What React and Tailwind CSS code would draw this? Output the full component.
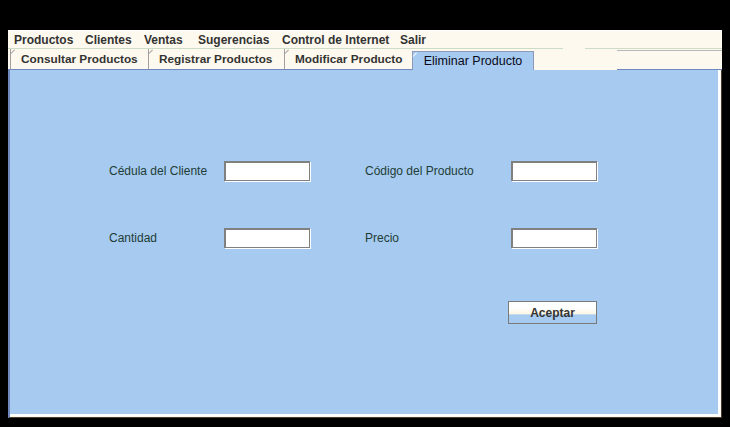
import React from 'react';

const menu = [
  { label: 'Productos', w: 'w-[71px]' },
  { label: 'Clientes', w: 'w-[59px]' },
  { label: 'Ventas', w: 'w-[54px]' },
  { label: 'Sugerencias', w: 'w-[84px]' },
  { label: 'Control de Internet', w: 'w-[118px]' },
  { label: 'Salir', w: 'w-[40px]' },
];

const tabs = [
  { label: 'Consultar Productos', w: 'w-[138px]' },
  { label: 'Registrar Productos', w: 'w-[136px]' },
  { label: 'Modificar Producto', w: 'w-[128px]' },
];

// Campo de texto clásico con borde hundido
const Field = () => (
  <input
    type="text"
    className="w-[86px] h-[20px] bg-white border-t-2 border-l-2 border-r border-b border-[#808080] shadow-[1px_1px_0_#ffffff] outline-none"
  />
);

const Label = ({ children, w }) => (
  <span className={`${w} text-[12px] text-[#1f3d36]`}>{children}</span>
);

export default function App() {
  return (
    <div
      className="w-[730px] h-[427px] bg-black pt-[30px] pl-[8px] overflow-hidden"
      style={{ fontFamily: '"Liberation Sans", Arial, sans-serif' }}
    >
      <div className="w-[714px] h-[388px] bg-[#fdf9ee] flex flex-col">
        {/* Barra de menú */}
        <div className="h-[18px] border-t border-white flex items-center pl-[6px] text-[12px] font-bold text-[#333333]">
          {menu.map((m) => (
            <span key={m.label} className={`${m.w} shrink-0`}>
              {m.label}
            </span>
          ))}
        </div>
        <div className="flex h-px">
          <div className="w-[555px] bg-[#cddcc6]" />
          <div className="w-[22px]" />
          <div className="flex-1 bg-[#cddcc6]" />
        </div>

        {/* Pestañas */}
        <div className="flex h-[21px]">
          <div className="w-[2px] border-b border-[#7088bd]" />
          {tabs.map((t) => (
            <div
              key={t.label}
              className={`${t.w} relative border-l border-[#a0a0a0] border-b border-b-[#7088bd] flex items-center pl-[10px] text-[11.8px] font-bold text-[#333333] pt-[1px]`}
            >
              <span className="absolute left-0 top-0 w-[5px] h-px bg-[#a0a0a0] origin-left -rotate-45 translate-y-[4px]" />
              {t.label}
            </div>
          ))}
          <div className="w-[122px] mt-[2px] bg-[#a6caf0] border-l border-t border-r border-[#8c9ab8] flex items-center justify-center text-[12.5px] text-[#0a0a1a] relative">
            <span className="absolute left-0 top-0 w-[5px] h-px bg-white origin-left -rotate-45 translate-y-[4px]" />
            Eliminar Producto
          </div>
          <div className="w-[83px]" />
          <div className="flex-1 border-t border-t-[#b8b8b8] mt-[1px] border-b border-b-[#7088bd]" />
        </div>

        {/* Panel */}
        <div className="flex-1 flex border-l-2 border-[#7088bd] border-r border-r-[#4a3f36] border-b border-b-[#4a3f36]">
          <div className="flex-1 border-r border-b border-[#fdf9ee]">
            <div className="h-full bg-[#a6caf0] border-r-2 border-b-2 border-white pl-[99px] pt-[91px] flex flex-col">
              <div className="flex items-center h-[20px]">
                <Label w="w-[115px]">Cédula del Cliente</Label>
                <Field />
                <span className="w-[55px]" />
                <Label w="w-[146px]">Código del Producto</Label>
                <Field />
              </div>
              <div className="flex items-center h-[20px] mt-[47px]">
                <Label w="w-[115px]">Cantidad</Label>
                <Field />
                <span className="w-[55px]" />
                <Label w="w-[146px]">Precio</Label>
                <Field />
              </div>
              <div className="flex mt-[53px] pl-[399px]">
                <button className="w-[89px] h-[23px] border border-[#7a7a7a] bg-[linear-gradient(to_bottom,#ffffff_0%,#ffffff_30%,#fdf6e4_55%,#a6caf0_62%,#a6caf0_100%)] text-[12px] font-bold text-[#333333]">
                  Aceptar
                </button>
              </div>
            </div>
          </div>
        </div>
      </div>
    </div>
  );
}
